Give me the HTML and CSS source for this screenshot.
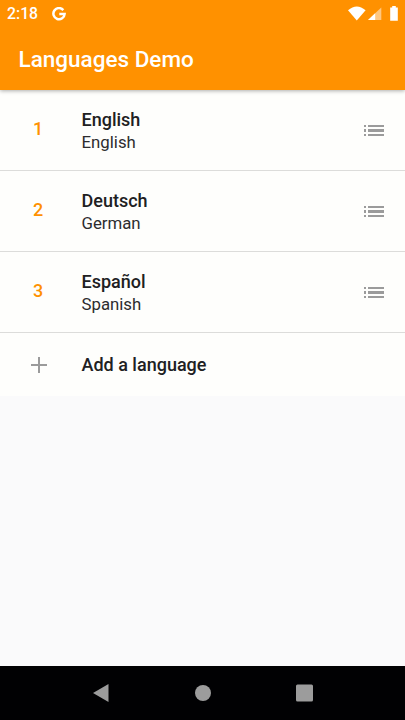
FILE: index.html
```
<!DOCTYPE html>
<html lang="en">
<head>
<meta charset="utf-8">
<title>Languages Demo</title>
<link rel="stylesheet" href="styles.css">
</head>
<body>
<div class="screen">
  <header class="header">
    <div class="status">
      <span class="time">2:18</span>
      <svg class="google" width="14" height="14" viewBox="0 0 14 14"><path d="M11.3 3.1A5.6 5.6 0 1 0 12.6 7H7.3" fill="none" stroke="#fff" stroke-width="2.5"/></svg>
      <svg class="signals" width="50" height="16" viewBox="0 0 50 16">
        <path d="M0 4.2Q8.8-3.4 17.6 4.2L8.8 14.4Z" fill="#fff"/>
        <path d="M20 14L33.3 1.5V14Z" fill="#ffc780"/>
        <path d="M20 14L27.2 7.2V14Z" fill="#fff"/>
        <path d="M42.2 1.6h2V0h3.6v1.6h2V14.7h-7.6Z" fill="#fff"/>
      </svg>
    </div>
    <h1 class="title">Languages Demo</h1>
  </header>
  <main class="list">
    <div class="row">
      <span class="number">1</span>
      <div class="names"><div class="name">English</div><div class="sub">English</div></div>
      <svg class="handle" width="20" height="12" viewBox="0 0 20 12"><path d="M0 0h2v2H0zM4 0h16v2H4zM0 4h2v3H0zM4 4h16v3H4zM0 9h2v2H0zM4 9h16v2H4z"/></svg>
    </div>
    <div class="row">
      <span class="number">2</span>
      <div class="names"><div class="name">Deutsch</div><div class="sub">German</div></div>
      <svg class="handle" width="20" height="12" viewBox="0 0 20 12"><path d="M0 0h2v2H0zM4 0h16v2H4zM0 4h2v3H0zM4 4h16v3H4zM0 9h2v2H0zM4 9h16v2H4z"/></svg>
    </div>
    <div class="row">
      <span class="number">3</span>
      <div class="names"><div class="name">Español</div><div class="sub">Spanish</div></div>
      <svg class="handle" width="20" height="12" viewBox="0 0 20 12"><path d="M0 0h2v2H0zM4 0h16v2H4zM0 4h2v3H0zM4 4h16v3H4zM0 9h2v2H0zM4 9h16v2H4z"/></svg>
    </div>
    <div class="row add">
      <svg class="plus" width="16" height="16" viewBox="0 0 16 16"><path d="M7 0h2v7h7v2H9v7H7V9H0V7h7z"/></svg>
      <div class="name">Add a language</div>
    </div>
  </main>
  <nav class="nav">
    <svg width="16" height="18" viewBox="0 0 16 18"><path d="M0 9L15.5 0V18Z"/></svg>
    <svg width="16" height="16" viewBox="0 0 16 16"><circle cx="8" cy="8" r="8"/></svg>
    <svg width="17" height="18" viewBox="0 0 17 18"><rect y=".5" width="17" height="17" rx="1.5"/></svg>
  </nav>
</div>
</body>
</html>
```
FILE: styles.css
```
* { box-sizing: border-box; }
body { margin: 0; font-family: Roboto, sans-serif; }
.screen {
  width: 405px;
  height: 720px;
  display: flex;
  flex-direction: column;
  background: #fafafb;
  overflow: hidden;
}
.header {
  height: 90px;
  flex: none;
  background: #ff9100;
  color: #fff;
  box-shadow: 0 1px 4px rgba(0, 0, 0, .32);
  z-index: 1;
}
.status {
  height: 28px;
  display: flex;
  align-items: center;
  padding: 0 7px;
}
.time { width: 44.5px; font-size: 15.8px; line-height: 28px; font-weight: 500; }
.signals { margin-left: auto; }
.title {
  margin: 14px 0 0 18.5px;
  font-size: 22.5px;
  line-height: 34px;
  font-weight: 500;
}
.list { flex: none; background: #fefefc; }
.row {
  height: 81px;
  display: flex;
  align-items: center;
  border-bottom: 1px solid #dcdcda;
}
.number {
  width: 76px;
  padding-bottom: 3px;
  text-align: center;
  color: #ff9100;
  font-size: 18px;
  font-weight: 500;
}
.names { margin-left: 5.5px; padding-top: 2px; flex: 1; }
.name {
  font-size: 18px;
  line-height: 23px;
  font-weight: 500;
  color: #202022;
}
.sub { font-size: 16.8px; line-height: 23px; color: #2c2c2e; }
.handle { margin: 2px 21px 0 0; fill: #9b9b9b; }
.add { height: 63px; border-bottom: 0; }
.plus { margin: 0 34.5px 0 31px; fill: #9b9b9b; }
.nav {
  height: 54px;
  margin-top: auto;
  padding: 0 92px 0 93px;
  display: flex;
  align-items: center;
  justify-content: space-between;
  background: #010103;
  fill: #9c9c9c;
}
```
